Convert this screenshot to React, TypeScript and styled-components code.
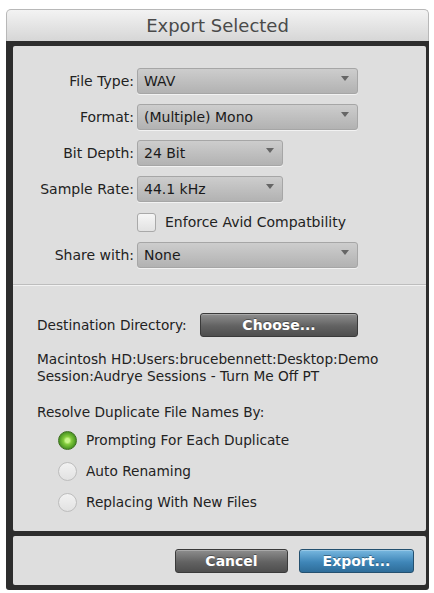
import React, { useState } from 'react';
import styled, { createGlobalStyle } from 'styled-components';

const GlobalStyle = createGlobalStyle`
  body {
    margin: 0;
    background: #ffffff;
    font-family: "DejaVu Sans", "Liberation Sans", sans-serif;
  }
`;

const Dialog = styled.div`
  width: 423px;
  margin: 9px 0 0 6px;
`;

const TitleBar = styled.div`
  height: 32px;
  display: flex;
  align-items: center;
  justify-content: center;
  background: linear-gradient(#f3f3f3, #d6d6d6);
  border: 1px solid #b8b8b8;
  border-bottom: none;
  border-radius: 5px 5px 0 0;
  box-sizing: border-box;
  font-size: 18px;
  color: #4a4a4a;
`;

const Frame = styled.div`
  background: #2d2d2d;
  padding: 5px 3px 5px 7px;
  display: flex;
  flex-direction: column;
  gap: 5px;
  border-radius: 0 0 3px 3px;
`;

const Panel = styled.div`
  background: #dedede;
  border-radius: 2px;
`;

const Body = styled(Panel)`
  padding: 22px 0 19px;
`;

const FormGrid = styled.div`
  display: grid;
  grid-template-columns: 121px auto;
  column-gap: 3px;
  row-gap: 10px;
  align-items: center;
`;

const Label = styled.div`
  text-align: right;
  font-size: 14px;
  color: #222222;
`;

const Select = styled.div<{ $wide?: boolean }>`
  width: ${p => (p.$wide ? 221 : 146)}px;
  height: 26px;
  box-sizing: border-box;
  padding: 0 8px 0 6px;
  display: flex;
  align-items: center;
  justify-content: space-between;
  background: linear-gradient(#cdcdcd, #b2b2b2);
  border: 1px solid #a6a6a6;
  border-radius: 3px;
  box-shadow: 0 1px 0 rgba(255, 255, 255, 0.6);
  font-size: 14px;
  color: #1a1a1a;
`;

const Arrow = styled.svg`
  align-self: flex-start;
  margin-top: 7px;
`;

const CheckRow = styled.label`
  grid-column: 2;
  display: flex;
  align-items: center;
  gap: 9px;
  height: 20px;
  font-size: 14px;
  color: #222222;
`;

const CheckBox = styled.span`
  width: 19px;
  height: 19px;
  box-sizing: border-box;
  border: 1px solid #a9a9a9;
  border-radius: 3px;
  background: linear-gradient(#f6f6f6, #e2e2e2);
`;

const Separator = styled.div`
  margin-top: 16px;
  height: 1px;
  background: #bdbdbd;
  border-bottom: 1px solid #f2f2f2;
`;

const Section = styled.div`
  padding: 27px 0 0 24px;
  font-size: 13.7px;
  color: #222222;
`;

const DestRow = styled.div`
  display: flex;
  align-items: center;
`;

const DestLabel = styled.span`
  width: 163px;
`;

const DarkButton = styled.button<{ $w: number; $blue?: boolean }>`
  width: ${p => p.$w}px;
  height: 24px;
  padding: 0;
  border: 1px solid ${p => (p.$blue ? '#24506f' : '#3a3a3a')};
  border-radius: 3px;
  background: ${p =>
    p.$blue
      ? 'linear-gradient(#78b8e0, #3f86b8 55%, #2e6d99)'
      : 'linear-gradient(#8e8e8e, #626262 55%, #4e4e4e)'};
  color: #ffffff;
  font-family: "DejaVu Sans", sans-serif;
  font-weight: bold;
  font-size: 14px;
  text-shadow: 0 -1px 0 rgba(0, 0, 0, 0.35);
  box-shadow: inset 0 1px 0 rgba(255, 255, 255, 0.25);
`;

const PathText = styled.div`
  margin-top: 14px;
  line-height: 17px;
`;

const Heading = styled.div`
  margin-top: 19px;
  line-height: 17px;
`;

const RadioList = styled.div`
  margin: 9px 0 0 21px;
  display: flex;
  flex-direction: column;
  gap: 11px;
`;

const RadioRow = styled.label`
  display: flex;
  align-items: center;
  gap: 9px;
  height: 20px;
  cursor: pointer;
`;

const RadioDot = styled.span<{ $on: boolean }>`
  width: 19px;
  height: 19px;
  box-sizing: border-box;
  border-radius: 50%;
  border: 1px solid ${p => (p.$on ? '#3d6e1f' : '#bdbdbd')};
  background: ${p =>
    p.$on
      ? 'radial-gradient(circle, #c8f58a 0 2px, #84cc3e 4px, #4f9a24 8px)'
      : 'linear-gradient(#f2f2f2, #e2e2e2)'};
`;

const Footer = styled(Panel)`
  height: 49px;
  display: flex;
  align-items: center;
  justify-content: flex-end;
  gap: 11px;
  padding-right: 12px;
`;

const DropArrow = () => (
  <Arrow width="8" height="5" viewBox="0 0 8 5">
    <path d="M0 0 H8 L4 5 Z" fill="#666666" />
  </Arrow>
);

const rows: { label: string; value: string; wide: boolean }[] = [
  { label: 'File Type:', value: 'WAV', wide: true },
  { label: 'Format:', value: '(Multiple) Mono', wide: true },
  { label: 'Bit Depth:', value: '24 Bit', wide: false },
  { label: 'Sample Rate:', value: '44.1 kHz', wide: false },
];

const options = ['Prompting For Each Duplicate', 'Auto Renaming', 'Replacing With New Files'];

export default function App() {
  const [choice, setChoice] = useState(0);

  return (
    <>
      <GlobalStyle />
      <Dialog>
        <TitleBar>Export Selected</TitleBar>
        <Frame>
          <Body>
            <FormGrid>
              {rows.map(r => (
                <React.Fragment key={r.label}>
                  <Label>{r.label}</Label>
                  <Select $wide={r.wide}>
                    <span>{r.value}</span>
                    <DropArrow />
                  </Select>
                </React.Fragment>
              ))}
              <CheckRow>
                <CheckBox />
                Enforce Avid Compatbility
              </CheckRow>
              <Label>Share with:</Label>
              <Select $wide>
                <span>None</span>
                <DropArrow />
              </Select>
            </FormGrid>
            <Separator />
            <Section>
              <DestRow>
                <DestLabel>Destination Directory:</DestLabel>
                <DarkButton $w={158}>Choose...</DarkButton>
              </DestRow>
              <PathText>
                Macintosh HD:Users:brucebennett:Desktop:Demo
                <br />
                Session:Audrye Sessions - Turn Me Off PT
              </PathText>
              <Heading>Resolve Duplicate File Names By:</Heading>
              <RadioList>
                {options.map((o, i) => (
                  <RadioRow key={o} onClick={() => setChoice(i)}>
                    <RadioDot $on={choice === i} />
                    {o}
                  </RadioRow>
                ))}
              </RadioList>
            </Section>
          </Body>
          <Footer>
            <DarkButton $w={113}>Cancel</DarkButton>
            <DarkButton $w={115} $blue>Export...</DarkButton>
          </Footer>
        </Frame>
      </Dialog>
    </>
  );
}
